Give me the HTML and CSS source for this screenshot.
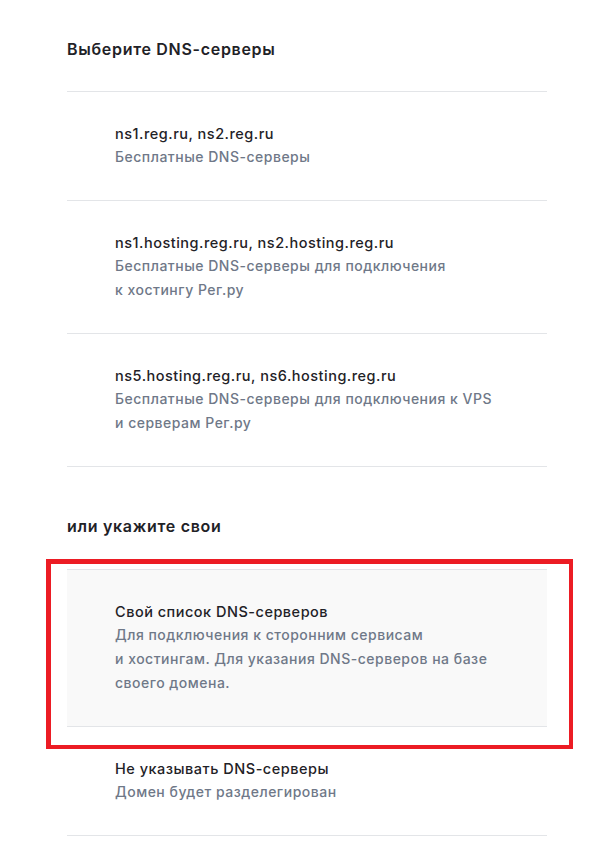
FILE: index.html
```html
<!DOCTYPE html>
<html lang="ru">
<head>
  <meta charset="UTF-8">
  <meta name="viewport" content="width=device-width, initial-scale=1.0">
  <title>DNS-серверы</title>
  <link rel="stylesheet" href="styles.css">
</head>
<body>
  <div class="panel">
    <h2 class="section-title">Выберите DNS-серверы</h2>
    <div class="options">
      <div class="option">
        <div class="option-name">ns1.reg.ru, ns2.reg.ru</div>
        <div class="option-desc">Бесплатные DNS-серверы</div>
      </div>
      <div class="option">
        <div class="option-name">ns1.hosting.reg.ru, ns2.hosting.reg.ru</div>
        <div class="option-desc">Бесплатные DNS-серверы для подключения<br>к хостингу Рег.ру</div>
      </div>
      <div class="option">
        <div class="option-name">ns5.hosting.reg.ru, ns6.hosting.reg.ru</div>
        <div class="option-desc">Бесплатные DNS-серверы для подключения к VPS<br>и серверам Рег.ру</div>
      </div>
    </div>

    <h2 class="section-title second">или укажите свои</h2>
    <div class="options">
      <div class="option selected">
        <div class="option-name">Свой список DNS-серверов</div>
        <div class="option-desc">Для подключения к сторонним сервисам<br>и хостингам. Для указания DNS-серверов на базе<br>своего домена.</div>
      </div>
      <div class="option last">
        <div class="option-name">Не указывать DNS-серверы</div>
        <div class="option-desc">Домен будет разделегирован</div>
      </div>
    </div>
  </div>
</body>
</html>
```

FILE: styles.css
```css
body { margin: 0; background: #fff; font-family: Inter, "Noto Sans", sans-serif; color: #1f2227; }
.panel { width: 480px; margin-left: 67px; padding-top: 37px; }
.section-title { margin: 0 0 30px; font-size: 16px; line-height: 24px; font-weight: 600; letter-spacing: 0.7px; }
.section-title.second { margin: 47px 0 31px; }
.options { border-top: 1px solid #e3e5e8; }
.options:last-child { border-top: none; }
.option { position: relative; padding: 30px 0 31px 48px; border-bottom: 1px solid #e3e5e8; letter-spacing: 0.5px; }
.option-name { font-size: 14.5px; line-height: 23px; font-weight: 500; }
.option-desc { font-size: 14px; line-height: 24px; font-weight: 500; color: #6f7888; }
.option.selected { background: #f9f9f9; border-top: 1px solid #e3e5e8; }
.option.selected::after { content: ""; position: absolute; top: -11px; left: -21px; right: -26px; bottom: -23px; border-style: solid; border-color: #ec1c24; border-width: 5px 4px 4px 5px; }
```
